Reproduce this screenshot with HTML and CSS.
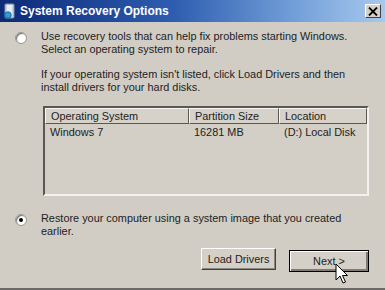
FILE: index.html
```html
<!DOCTYPE html>
<html>
<head>
<meta charset="utf-8">
<link rel="stylesheet" href="styles.css">
</head>
<body>
<div class="window">
  <div class="titlebar">
    <svg class="appicon" width="14" height="16" viewBox="0 0 14 16">
      <rect x="2" y="1" width="9" height="14" rx="1" fill="#c9d2de" stroke="#8a96a8"/>
      <rect x="4" y="2" width="5" height="11" fill="#e8edf4"/>
      <circle cx="5" cy="12" r="3.2" fill="#2aa0d8" stroke="#1a6c9c"/>
    </svg>
    <span class="title">System Recovery Options</span>
    <span class="close">
      <svg width="10" height="9" viewBox="0 0 10 9"><path d="M1 0.5 L9 8.5 M9 0.5 L1 8.5" stroke="#000" stroke-width="1.8"/></svg>
    </span>
  </div>
  <div class="content">
    <div class="option">
      <span class="radio"></span>
      <div class="opttext">
        <p>Use recovery tools that can help fix problems starting Windows.<br>Select an operating system to repair.</p>
        <p class="gap">If your operating system isn't listed, click Load Drivers and then<br>install drivers for your hard disks.</p>
        <div class="list">
          <div class="row head">
            <span class="c1">Operating System</span>
            <span class="c2">Partition Size</span>
            <span class="c3">Location</span>
          </div>
          <div class="row">
            <span class="c1">Windows 7</span>
            <span class="c2">16281 MB</span>
            <span class="c3">(D:) Local Disk</span>
          </div>
        </div>
      </div>
    </div>
    <div class="option second">
      <span class="radio checked"></span>
      <div class="opttext">
        <p>Restore your computer using a system image that you created<br>earlier.</p>
      </div>
    </div>
    <div class="buttons">
      <button class="btn">Load Drivers</button>
      <button class="btn default">Next &gt;</button>
    </div>
  </div>
  <svg class="cursor" width="14" height="22" viewBox="0 0 14 22">
    <path d="M1 1 L1 17 L5 13 L8 20 L10.5 19 L7.5 12.5 L12.5 12.5 Z" fill="#fff" stroke="#000" stroke-width="1"/>
  </svg>
</div>
</body>
</html>
```

FILE: styles.css
```css
html, body {
  margin: 0;
  padding: 0;
}
body {
  width: 385px;
  height: 290px;
  overflow: hidden;
  background: #d1cdc5;
  font-family: "Liberation Sans", Arial, sans-serif;
}
.window {
  position: relative;
  width: 385px;
  height: 290px;
  box-sizing: border-box;
  background: #d1cdc5;
  border-bottom: 2px solid #6b6a66;
  display: flex;
  flex-direction: column;
}
.titlebar {
  height: 22px;
  flex: none;
  display: flex;
  align-items: center;
  padding: 0 4px 0 3px;
  background: linear-gradient(to right, #0c2a78 0%, #2e5db0 45%, #7aa6dc 80%, #a8c8ee 100%);
  color: #fff;
}
.appicon {
  flex: none;
  margin-right: 3px;
}
.title {
  font-family: "Liberation Sans", Arial, sans-serif;
  font-weight: bold;
  font-size: 12px;
  flex: 1;
}
.close {
  width: 16px;
  height: 14px;
  box-sizing: border-box;
  background: #d4d0c8;
  border: 1px solid;
  border-color: #fff #404040 #404040 #fff;
  display: flex;
  align-items: center;
  justify-content: center;
}
.content {
  flex: 1;
  display: flex;
  flex-direction: column;
  padding: 8px 16px 0 14px;
  font-family: "Liberation Sans", Arial, sans-serif;
  font-size: 10.9px;
  color: #222;
}
p {
  margin: 0;
  line-height: 13px;
}
p.gap {
  margin-top: 12px;
}
.option {
  display: flex;
  align-items: flex-start;
}
.option.second {
  margin-top: 16px;
}
.radio {
  flex: none;
  width: 10px;
  height: 10px;
  border-radius: 50%;
  background: #fff;
  border: 1px solid #9a968e;
  box-shadow: inset 1px 1px 1px #707070;
  margin: 2px 14px 0 1px;
  position: relative;
}
.radio.checked::after {
  content: "";
  position: absolute;
  left: 3px;
  top: 3px;
  width: 4px;
  height: 4px;
  border-radius: 50%;
  background: #000;
}
.opttext {
  flex: 1;
}
.list {
  margin: 12px 0 0 2px;
  height: 90px;
  box-sizing: border-box;
  border: 2px solid;
  border-color: #5a5852 #f4f2ee #f4f2ee #5a5852;
  background: #d3cfc7;
}
.row {
  display: grid;
  grid-template-columns: 144px 90px 1fr;
  height: 16px;
  align-items: center;
}
.row span {
  padding-left: 5px;
}
.row.head span {
  height: 16px;
  box-sizing: border-box;
  line-height: 14px;
  border: 1px solid;
  border-color: #f8f6f2 #5a5852 #5a5852 #f8f6f2;
  background: #d6d2ca;
}
.buttons {
  display: flex;
  justify-content: flex-end;
  align-items: flex-start;
  gap: 13px;
  margin-top: 10px;
}
.btn {
  font-family: "Liberation Sans", Arial, sans-serif;
  font-size: 10.9px;
  color: #222;
  background: #d4d0c8;
  height: 22px;
  padding: 0;
  box-sizing: border-box;
  border: 1px solid;
  border-color: #fff #404040 #404040 #fff;
  box-shadow: inset -1px -1px 0 #8a877f;
}
.btn:first-child {
  width: 75px;
}
.btn.default {
  width: 80px;
  margin-top: 2px;
  border: 1px solid #000;
  box-shadow: inset 1px 1px 0 #fff, inset -2px -2px 0 #7f7c76;
}
.cursor {
  position: absolute;
  left: 335px;
  top: 263px;
}
```
